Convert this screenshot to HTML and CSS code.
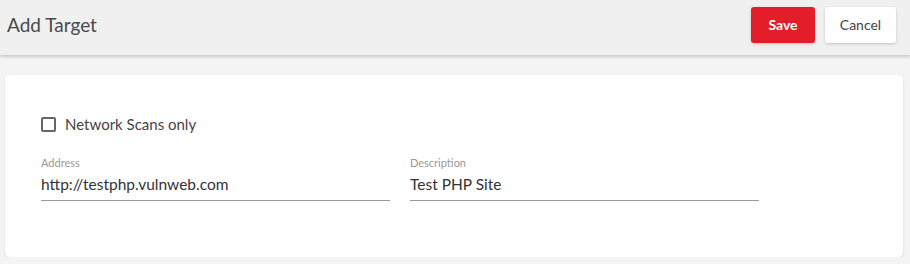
FILE: index.html
```html
<!DOCTYPE html>
<html lang="en">
<head>
    <meta charset="UTF-8">
    <meta name="viewport" content="width=device-width, initial-scale=1.0">
    <title>Add Target</title>
<link rel="stylesheet" href="styles.css">
</head>
<body>
    <header class="header">
        <h1 class="title">Add Target</h1>
        <div class="actions">
            <button class="btn btn-save">Save</button>
            <button class="btn btn-cancel">Cancel</button>
        </div>
    </header>

    <main class="content">
        <section class="card">
            <label class="check">
                <span class="check-box"></span>
                <span>Network Scans only</span>
            </label>

            <div class="fields">
                <div class="field">
                    <div class="field-label">Address</div>
                    <div class="field-value">http://testphp.vulnweb.com</div>
                </div>
                <div class="field">
                    <div class="field-label">Description</div>
                    <div class="field-value">Test PHP Site</div>
                </div>
            </div>
        </section>
    </main>
</body>
</html>
```

FILE: styles.css
```css
/* General Styles */
body {
    font-family: Lato, "Open Sans", sans-serif;
    margin: 0;
    padding: 0;
    color: #333333;
    background-color: #f4f4f4;
}

.header {
    display: flex;
    align-items: center;
    justify-content: space-between;
    height: 55px;
    padding: 0 14px 6px 7px;
    box-sizing: border-box;
    background-color: #f0f0f0;
    box-shadow: 0 2px 3px rgba(0, 0, 0, 0.18);
}

.title {
    margin: 0;
    font-size: 19px;
    font-weight: 400;
    color: #4a4a4a;
}

.actions {
    display: flex;
    gap: 10px;
}

.btn {
    font-family: inherit;
    font-size: 14px;
    height: 36px;
    border: none;
    border-radius: 3px;
    box-shadow: 0 1px 3px rgba(0, 0, 0, 0.2);
    cursor: pointer;
}

.btn-save {
    width: 64px;
    background-color: #e31e2a;
    color: #ffffff;
    font-weight: 700;
}

.btn-cancel {
    width: 71px;
    background-color: #ffffff;
    color: #444444;
}

/* Form card */
.content {
    padding: 20px 7px 0 5px;
}

.card {
    background-color: #ffffff;
    border-radius: 5px;
    box-shadow: 0 1px 3px rgba(0, 0, 0, 0.1);
    padding: 38px 36px 56px;
    height: 182px;
    box-sizing: border-box;
}

.check {
    display: flex;
    align-items: center;
    gap: 9px;
    font-size: 15px;
    color: #444444;
    height: 22px;
}

.check-box {
    width: 11px;
    height: 11px;
    border: 2px solid #666666;
    border-radius: 2px;
}

.fields {
    display: flex;
    gap: 20px;
    margin-top: 21px;
}

.field {
    width: 349px;
    border-bottom: 1px solid #999999;
}

.field-label {
    font-size: 11px;
    color: #999999;
    line-height: 14px;
}

.field-value {
    font-size: 15.5px;
    color: #333333;
    line-height: 20px;
    padding: 4px 0 6px;
}
```
